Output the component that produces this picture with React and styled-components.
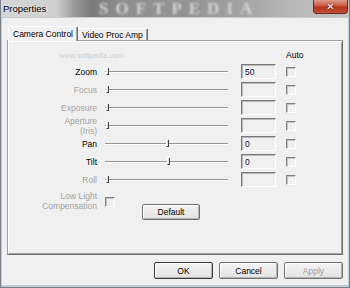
import React from "react";
import styled, { createGlobalStyle } from "styled-components";

const GlobalStyle = createGlobalStyle`
    html, body {
        margin: 0;
        padding: 0;
        background: #ffffff;
    }
    body {
        font-family: "Liberation Sans", Arial, sans-serif;
        font-size: 8.5px;
        color: #000;
    }
`;

const Window = styled.div`
    width: 350px;
    height: 288px;
    box-sizing: border-box;
    display: flex;
    flex-direction: column;
    background: #c6ccd2;
    border: 1px solid #76808a;
    border-top: none;
    overflow: hidden;
`;

const TitleBar = styled.div`
    position: relative;
    height: 17px;
    flex: none;
    display: flex;
    align-items: center;
    padding-left: 2px;
    overflow: hidden;
    background: linear-gradient(
        90deg,
        #d6d6d6 0%,
        #cfcfcf 16%,
        #9a9a9a 21%,
        #7a7a7a 26%,
        #8e8e8e 34%,
        #949494 55%,
        #a4a4a4 70%,
        #b6b6b6 82%,
        #c2c2c2 100%
    );
`;

const TitleText = styled.span`
    position: relative;
    z-index: 1;
    font-size: 9.5px;
    color: #000;
    text-shadow: 0 0 4px #e8e8e8, 0 0 2px #e8e8e8;
`;

const Watermark = styled.span`
    position: absolute;
    left: 98px;
    top: 0;
    line-height: 17px;
    font-family: "Liberation Serif", "Times New Roman", serif;
    font-weight: bold;
    font-size: 17px;
    letter-spacing: 7px;
    color: #d4d4d4;
    filter: blur(0.8px);
`;

const CloseButton = styled.div`
    position: absolute;
    right: 1px;
    top: -1px;
    width: 35px;
    height: 15px;
    box-sizing: border-box;
    border: 1px solid #6b2a20;
    border-top: none;
    border-radius: 0 0 4px 4px;
    background: linear-gradient(#e2a392 0%, #d06a56 40%, #b8321f 60%, #c4503a 100%);
    display: flex;
    align-items: center;
    justify-content: center;
    color: #fff;
    font-family: "DejaVu Sans", sans-serif;
    font-weight: bold;
    font-size: 10px;
    text-shadow: 0 0 2px #5a1a10, 0 0 1px #5a1a10;
`;

const Client = styled.div`
    flex: 1;
    margin: 1px 1px 2px 1px;
    background: #f0f0f0;
    display: flex;
    flex-direction: column;
    padding: 8px 5px 6px 5px;
    box-sizing: border-box;
`;

const TabStrip = styled.div`
    height: 14px;
    display: flex;
    align-items: flex-end;
    padding-left: 1px;
    position: relative;
    z-index: 1;
`;

const Tab = styled.div`
    box-sizing: border-box;
    height: ${(p) => (p.$active ? "15px" : "12px")};
    margin-bottom: ${(p) => (p.$active ? "-1px" : "0")};
    padding: 0 4px;
    display: flex;
    align-items: center;
    background: #f0f0f0;
    border-top: 1px solid #ffffff;
    border-left: ${(p) => (p.$active ? "1px solid #ffffff" : "none")};
    border-right: 1px solid #6e6e6e;
    box-shadow: inset -1px 0 #a0a0a0;
    border-radius: 2px 2px 0 0;
    white-space: nowrap;
`;

const Panel = styled.div`
    height: 215px;
    box-sizing: border-box;
    border: 1px solid #a0a0a0;
    border-right-color: #6e6e6e;
    border-bottom-color: #6e6e6e;
    box-shadow: inset 1px 1px #ffffff, inset -1px -1px #a0a0a0;
    padding-top: 8px;
`;

const ControlGrid = styled.div`
    display: grid;
    grid-template-columns: 97px 136px 45px 10px;
    grid-template-rows: 12px repeat(7, 15px) 30px;
    row-gap: 3px;
    align-items: center;
`;

const SiteMark = styled.span`
    grid-column: 1 / 3;
    padding-left: 51px;
    font-size: 7.5px;
    color: #cfcfcf;
`;

const AutoHeader = styled.span`
    grid-column: 4;
    white-space: nowrap;
`;

const Label = styled.div`
    text-align: right;
    padding-right: 8px;
    line-height: 10px;
    color: ${(p) => (p.$disabled ? "#a2a2a2" : "#000")};
    align-self: ${(p) => (p.$top ? "start" : "center")};
    padding-top: ${(p) => (p.$top ? "1px" : "0")};
`;

const Track = styled.div`
    position: relative;
    width: 123px;
    height: 0;
    border-top: 1px solid #969696;
    border-bottom: 1px solid #ffffff;
`;

const Thumb = styled.div`
    position: absolute;
    top: -4px;
    width: 3px;
    height: 7px;
    box-sizing: border-box;
    border-right: 1px solid #404040;
    border-bottom: 1px solid #404040;
    border-left: 1px solid #ffffff;
    background: #e4e4e4;
`;

const EditBox = styled.div`
    width: 35px;
    height: 15px;
    box-sizing: border-box;
    border-top: 1px solid #7a7a7a;
    border-left: 1px solid #7a7a7a;
    border-right: 1px solid #ffffff;
    border-bottom: 1px solid #ffffff;
    box-shadow: inset 1px 1px #b9b9b9;
    background: #f0f0f0;
    padding-left: 3px;
    display: flex;
    align-items: center;
    color: #10103a;
`;

const CheckBox = styled.div`
    width: 10px;
    height: 10px;
    box-sizing: border-box;
    border-top: 1px solid #808080;
    border-left: 1px solid #808080;
    border-right: 1px solid #ffffff;
    border-bottom: 1px solid #ffffff;
    box-shadow: inset 1px 1px #c4c4c4;
    background: #f0f0f0;
    margin-top: ${(p) => p.$offset || 0}px;
`;

const LowLightCell = styled.div`
    grid-column: 2 / 4;
    align-self: stretch;
    display: flex;
    align-items: flex-start;
`;

const Button = styled.div`
    width: ${(p) => p.$width || 59}px;
    height: ${(p) => p.$height || 17}px;
    box-sizing: border-box;
    display: flex;
    align-items: center;
    justify-content: center;
    border: 1px solid ${(p) => (p.$default ? "#3a3a3a" : "#707070")};
    border-radius: 2px;
    box-shadow: inset 1px 1px #ffffff, inset -1px -1px #b4b4b4;
    background: linear-gradient(#f4f4f4, #e2e2e2);
    color: ${(p) => (p.$disabled ? "#a0a0a0" : "#000")};
    font-size: 8.5px;
`;

const DefaultButton = styled(Button)`
    align-self: flex-end;
    margin-left: 27px;
`;

const ButtonRow = styled.div`
    margin-top: 7px;
    display: flex;
    justify-content: flex-end;
    gap: 6px;
`;

const controls = [
    { name: "Zoom", value: "50", pos: 0 },
    { name: "Focus", disabled: true, pos: 0 },
    { name: "Exposure", disabled: true, pos: 0 },
    { name: "Aperture\n(Iris)", disabled: true, pos: 0 },
    { name: "Pan", value: "0", pos: 0.51 },
    { name: "Tilt", value: "0", pos: 0.52 },
    { name: "Roll", disabled: true, pos: 0 },
];

function Slider({ pos }) {
    return (
        <Track>
            <Thumb style={{ left: Math.round(1 + pos * 118) + "px" }} />
        </Track>
    );
}

export default function App() {
    return (
        <>
            <GlobalStyle />
            <Window>
                <TitleBar>
                    <Watermark>SOFTPEDIA</Watermark>
                    <TitleText>Properties</TitleText>
                    <CloseButton>✕</CloseButton>
                </TitleBar>
                <Client>
                    <TabStrip>
                        <Tab $active>Camera Control</Tab>
                        <Tab>Video Proc Amp</Tab>
                    </TabStrip>
                    <Panel>
                        <ControlGrid>
                            <SiteMark>www.softpedia.com</SiteMark>
                            <span />
                            <AutoHeader>Auto</AutoHeader>
                            {controls.map((c) => (
                                <React.Fragment key={c.name}>
                                    <Label $disabled={c.disabled}>
                                        {c.name.split("\n").map((line) => (
                                            <div key={line}>{line}</div>
                                        ))}
                                    </Label>
                                    <Slider pos={c.pos} />
                                    <EditBox>{c.value}</EditBox>
                                    <CheckBox />
                                </React.Fragment>
                            ))}
                            <Label $disabled $top>
                                <div>Low Light</div>
                                <div>Compensation</div>
                            </Label>
                            <LowLightCell>
                                <CheckBox $offset={7} />
                                <DefaultButton $width={58} $height={16}>
                                    Default
                                </DefaultButton>
                            </LowLightCell>
                        </ControlGrid>
                    </Panel>
                    <ButtonRow>
                        <Button $default>OK</Button>
                        <Button>Cancel</Button>
                        <Button $disabled>Apply</Button>
                    </ButtonRow>
                </Client>
            </Window>
        </>
    );
}
